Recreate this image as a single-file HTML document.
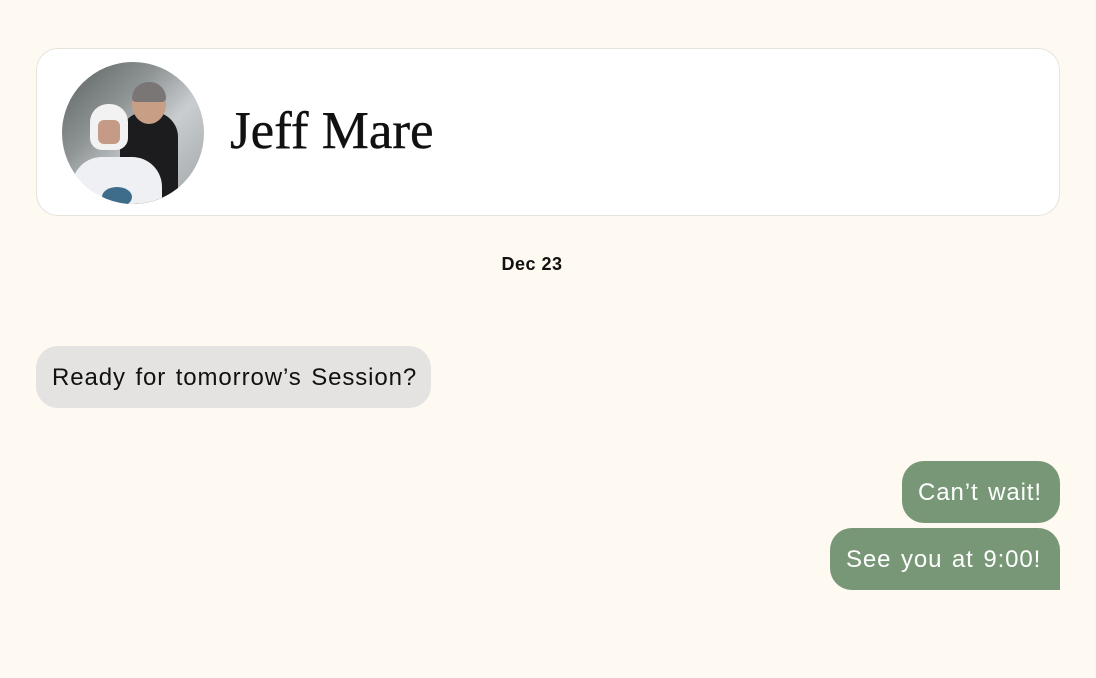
<!DOCTYPE html>
<html><head><meta charset="utf-8"><style>
html,body{margin:0;padding:0;}
body{width:1096px;height:678px;background:#fffaf1;position:relative;overflow:hidden;font-family:"Liberation Sans",sans-serif;}
.card{position:absolute;left:36px;top:48px;width:1024px;height:168px;background:#fff;border:1.5px solid #e6e3dd;border-radius:22px;box-sizing:border-box;}
.av{position:absolute;left:62px;top:62px;width:142px;height:142px;border-radius:50%;overflow:hidden;background:linear-gradient(135deg,#5a5f60 0%,#8e9394 35%,#c9cdd0 60%,#9fa4a6 100%);}
.name{position:absolute;left:230px;top:101px;font-family:"Liberation Serif",serif;font-size:53px;color:#111;-webkit-text-stroke:0.4px #111;}
.date{position:absolute;left:0;width:1064px;text-align:center;top:254px;font-size:18px;font-weight:bold;color:#111;letter-spacing:0.5px;}
.b{position:absolute;height:62px;line-height:64px;font-size:24px;padding:0 16px;box-sizing:border-box;border-radius:22px;letter-spacing:0.9px;word-spacing:2px;white-space:nowrap;}
.in{left:36px;top:346px;width:395px;background:#e4e3e1;color:#111;}
.o1{left:902px;top:461px;width:158px;background:#789777;color:#fff;}
.o2{left:830px;top:528px;width:230px;background:#789777;color:#fff;border-bottom-right-radius:0;}
</style></head><body>
<div class="card"></div>
<div class="av">
 <div style="position:absolute;left:58px;top:50px;width:58px;height:110px;background:#1c1c1f;border-radius:25px 25px 0 0"></div>
 <div style="position:absolute;left:70px;top:22px;width:34px;height:40px;background:#c89e84;border-radius:50%"></div>
 <div style="position:absolute;left:70px;top:20px;width:34px;height:20px;background:#7a7675;border-radius:17px 17px 4px 4px"></div>
 <div style="position:absolute;left:10px;top:95px;width:90px;height:60px;background:#eef0f4;border-radius:30px 30px 0 0"></div>
 <div style="position:absolute;left:28px;top:42px;width:38px;height:46px;background:#f2f2f2;border-radius:18px 18px 12px 12px"></div>
 <div style="position:absolute;left:36px;top:58px;width:22px;height:24px;background:#c59a86;border-radius:6px"></div>
 <div style="position:absolute;left:40px;top:125px;width:30px;height:20px;background:#3d6d8a;border-radius:50%"></div>
</div>
<div class="name">Jeff Mare</div>
<div class="date">Dec 23</div>
<div class="b in">Ready for tomorrow’s Session?</div>
<div class="b o1">Can’t wait!</div>
<div class="b o2">See you at 9:00!</div>
</body></html>
